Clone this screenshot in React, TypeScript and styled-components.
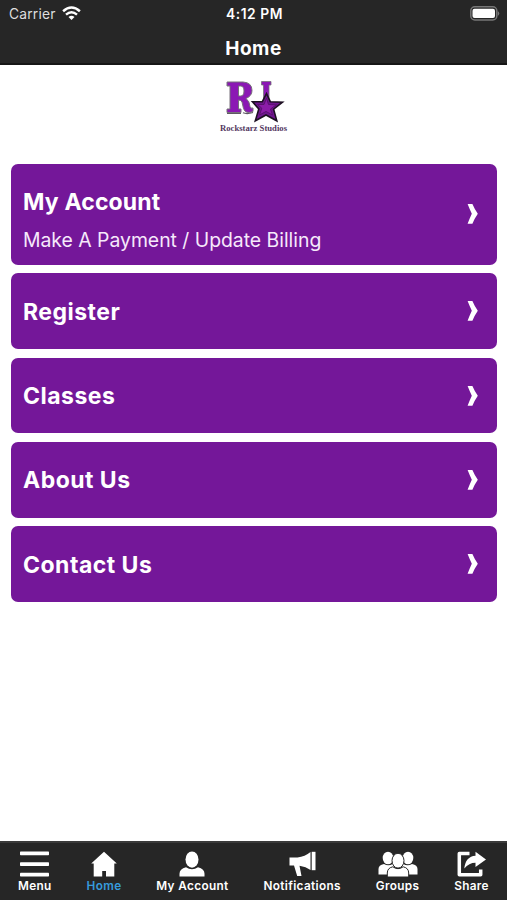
import React from "react";
import styled, { createGlobalStyle } from "styled-components";

const Global = createGlobalStyle`
  * { box-sizing: border-box; }
  body { margin: 0; background: #fff; }
`;

const Screen = styled.div`
  width: 507px;
  height: 900px;
  display: flex;
  flex-direction: column;
  background: #fff;
  color: #fff;
  font-family: Inter, "Liberation Sans", sans-serif;
  overflow: hidden;
`;

const Header = styled.header`
  height: 65px;
  flex: none;
  background: #262626;
  border-bottom: 2px solid #161616;
`;

const StatusBar = styled.div`
  height: 28px;
  padding: 0 7px 0 9px;
  display: grid;
  grid-template-columns: 1fr auto 1fr;
  align-items: center;
`;

const Carrier = styled.div`
  display: flex;
  align-items: center;
  gap: 6px;
  font-size: 13.8px;
  letter-spacing: 0.2px;
  color: #dedede;

  svg { margin-top: -2px; }
`;

const Clock = styled.div`
  font-size: 13.8px;
  font-weight: 600;
  letter-spacing: 0.55px;
`;

const BatterySlot = styled.div`
  display: flex;
  justify-content: flex-end;
  padding-bottom: 2px;
`;

const Title = styled.h1`
  margin: 0;
  height: 41px;
  line-height: 42px;
  text-align: center;
  font-size: 19px;
  font-weight: 700;
  letter-spacing: 0.5px;
`;

const Content = styled.main`
  flex: 1;
  padding: 0 10.5px 0 11px;
`;

const LogoArea = styled.div`
  height: 98.5px;
  padding-top: 11px;
  display: flex;
  justify-content: center;
`;

const CardList = styled.nav`
  display: flex;
  flex-direction: column;
  gap: 8.7px;
`;

const Card = styled.a<{ $tall?: boolean }>`
  height: ${(p) => (p.$tall ? 101.3 : 75.6)}px;
  padding: 0 19px 0 12px;
  border-radius: 7px;
  background: #741799;
  display: flex;
  align-items: center;
  justify-content: space-between;
  letter-spacing: ${(p) => (p.$tall ? 0.15 : 0.48)}px;
`;

const CardText = styled.div<{ $tall?: boolean }>`
  display: flex;
  flex-direction: column;
  gap: 8px;
  padding-top: ${(p) => (p.$tall ? 14 : 1)}px;
`;

const CardTitle = styled.div`
  font-size: 23px;
  line-height: 30px;
  font-weight: 700;
`;

const CardSubtitle = styled.div`
  font-size: 19.4px;
  line-height: 30px;
  letter-spacing: -0.02px;
  color: #f6e9fb;
`;

const TabBar = styled.footer`
  height: 59px;
  flex: none;
  background: #262626;
  border-top: 2px solid #3a3a3a;
  padding: 8px 18px 0;
  display: flex;
  justify-content: space-between;
`;

const Tab = styled.a<{ $active?: boolean }>`
  display: flex;
  flex-direction: column;
  align-items: center;
  gap: 1px;
  font-size: 11.8px;
  line-height: 14px;
  font-weight: 600;
  letter-spacing: 0.35px;
  color: ${(p) => (p.$active ? "#369bdc" : "#fff")};
`;

const Wifi = () => (
  <svg width="19" height="15" viewBox="0 0 19 15" fill="none" stroke="#fff" strokeWidth="2.5">
    <path d="M1.1 5.2Q9.5-2.2 17.9 5.2" />
    <path d="M4 8.6Q9.5 3.9 15 8.6" />
    <path d="M6.5 10.9Q9.5 8.8 12.5 10.9L9.5 14Z" fill="#fff" stroke="none" />
  </svg>
);

const Battery = () => (
  <svg width="31" height="15" viewBox="0 0 31 15">
    <rect x="1.8" y="0.8" width="26" height="13.2" rx="4" fill="none" stroke="#777" strokeWidth="1.5" />
    <rect x="3.5" y="2.7" width="22.5" height="9.4" rx="2" fill="#fff" />
    <path d="M28.8 5Q31.8 7.5 28.8 10Z" fill="#777" />
  </svg>
);

const Logo = () => (
  <svg width="70" height="60" viewBox="0 0 70 60">
    <g fill="#8b18b4" stroke="#77717b" strokeWidth="1">
      <path
        fillRule="evenodd"
        d="M8 6H24Q33 6.5 33 14.5Q33 20 27 22.5Q30.5 25 31 30.5Q31.5 33 34 32V35.5Q26.5 38.5 24.5 32.5L23 26Q22.2 24 19.5 24V33H22V36.5H8V33H11V10H8ZM19.5 10V20H21.5Q25 20 25 15Q25 10 21.5 10Z"
      />
      <path d="M42.5 5.5H52V9H50V27H44.5V9H42.5Z" strokeWidth=".8" />
    </g>
    <path d="M8 37.5H22M24 36.8Q28 38.5 34 36.5" fill="none" stroke="#5e5862" strokeWidth="1.2" />
    <path
      d="M47.5 17.5L51.3 25.7 63.5 26.2 54.6 33.2 57.8 44.8 47 39 36.3 44.8 39.8 32.9 33.5 25.7 43.3 25.7Z"
      fill="#6e168e"
      stroke="#1d1022"
      strokeWidth="1.6"
    />
    <path
      d="M47.5 22L49.5 28.5 57.5 28.8 51.5 33 53.5 39 47 35.5 40.5 39 42.8 32.2 38.5 28.5 45 28.5Z"
      fill="#8b1ca8"
      stroke="#5a1070"
      strokeWidth="1"
    />
    <text
      x="1"
      y="55"
      textLength="67"
      lengthAdjust="spacingAndGlyphs"
      fontFamily="Liberation Serif, serif"
      fontSize="9"
      fontWeight="700"
      fill="#54385f"
    >
      Rockstarz Studios
    </text>
  </svg>
);

const Chevron = () => (
  <svg width="11" height="20" viewBox="0 0 11 20" fill="#fff">
    <path d="M.6 0H5.4Q7.5 5 10.8 9.8Q7.5 14.6 5.4 19.7H.6Q2.7 14.4 4.8 9.8Q2.7 5.2.6 0Z" />
  </svg>
);

const MenuIcon = () => (
  <svg width="29" height="27" viewBox="0 0 29 27" fill="#fff">
    <rect y="0.6" width="29" height="3.7" rx=".7" />
    <rect y="11.2" width="29" height="3.7" rx=".7" />
    <rect y="21.8" width="29" height="3.7" rx=".7" />
  </svg>
);

const HomeIcon = () => (
  <svg width="26" height="27" viewBox="0 0 26 27" fill="#fff">
    <path d="M13 .8L25.8 12.4H23.3V25.6H15V20H11.2V25.6H2.7V12.4H.2Z" />
  </svg>
);

const PersonIcon = () => (
  <svg width="26" height="27" viewBox="0 0 26 27" fill="#fff">
    <ellipse cx="13" cy="8.6" rx="6.5" ry="8.1" />
    <path d="M7 16.3Q13 20.4 19 16.3Q25.5 17.8 25.5 22.8V25.6H.5V22.8Q.5 17.8 7 16.3Z" />
  </svg>
);

const MegaphoneIcon = () => (
  <svg width="27" height="27" viewBox="0 0 27 27" fill="#fff">
    <path d="M.5 6.5H8.5Q16 5.5 21.5 1V19Q17 15.8 10.5 14.8L12.5 25H8.2L5 14.5H.5Z" />
    <path d="M22.7.8H26.5V19.2H22.7Z" />
  </svg>
);

const GroupsIcon = () => (
  <svg width="40" height="27" viewBox="0 0 40 27" fill="#fff">
    <ellipse cx="10" cy="7" rx="5.3" ry="6.3" />
    <ellipse cx="30" cy="7" rx="5.3" ry="6.3" />
    <path d="M.5 23.5V18Q.5 14 6 13Q10.5 15.7 15 12.8L18 23.5ZM39.5 23.5V18Q39.5 14 34 13Q29.5 15.7 25 12.8L22 23.5Z" />
    <g stroke="#262626" strokeWidth="1">
      <path d="M14.8 15.8Q20 19.5 25.2 15.8Q30.7 17 30.7 22V26H9.3V22Q9.3 17 14.8 15.8Z" />
      <ellipse cx="20" cy="9.7" rx="6" ry="7.4" />
    </g>
  </svg>
);

const ShareIcon = () => (
  <svg width="29" height="27" viewBox="0 0 29 27" fill="#fff">
    <path d="M12.5 2.5H2.3V23.7H23.7V18.5" fill="none" stroke="#fff" strokeWidth="3.5" strokeLinejoin="round" />
    <path d="M18.5.8L29 8.5L18.5 16V11.8Q12 11.8 7.3 17.5Q8.5 5.4 18.5 4.7Z" />
  </svg>
);

const cards = [
  { title: "My Account", subtitle: "Make A Payment / Update Billing" },
  { title: "Register" },
  { title: "Classes" },
  { title: "About Us" },
  { title: "Contact Us" },
];

const tabs = [
  { label: "Menu", Icon: MenuIcon },
  { label: "Home", Icon: HomeIcon, active: true },
  { label: "My Account", Icon: PersonIcon },
  { label: "Notifications", Icon: MegaphoneIcon },
  { label: "Groups", Icon: GroupsIcon },
  { label: "Share", Icon: ShareIcon },
];

export default function App() {
  return (
    <Screen>
      <Global />
      <Header>
        <StatusBar>
          <Carrier>Carrier <Wifi /></Carrier>
          <Clock>4:12 PM</Clock>
          <BatterySlot><Battery /></BatterySlot>
        </StatusBar>
        <Title>Home</Title>
      </Header>
      <Content>
        <LogoArea><Logo /></LogoArea>
        <CardList>
          {cards.map(({ title, subtitle }) => (
            <Card key={title} $tall={!!subtitle}>
              <CardText $tall={!!subtitle}>
                <CardTitle>{title}</CardTitle>
                {subtitle && <CardSubtitle>{subtitle}</CardSubtitle>}
              </CardText>
              <Chevron />
            </Card>
          ))}
        </CardList>
      </Content>
      <TabBar>
        {tabs.map(({ label, Icon, active }) => (
          <Tab key={label} $active={active}>
            <Icon />
            {label}
          </Tab>
        ))}
      </TabBar>
    </Screen>
  );
}
